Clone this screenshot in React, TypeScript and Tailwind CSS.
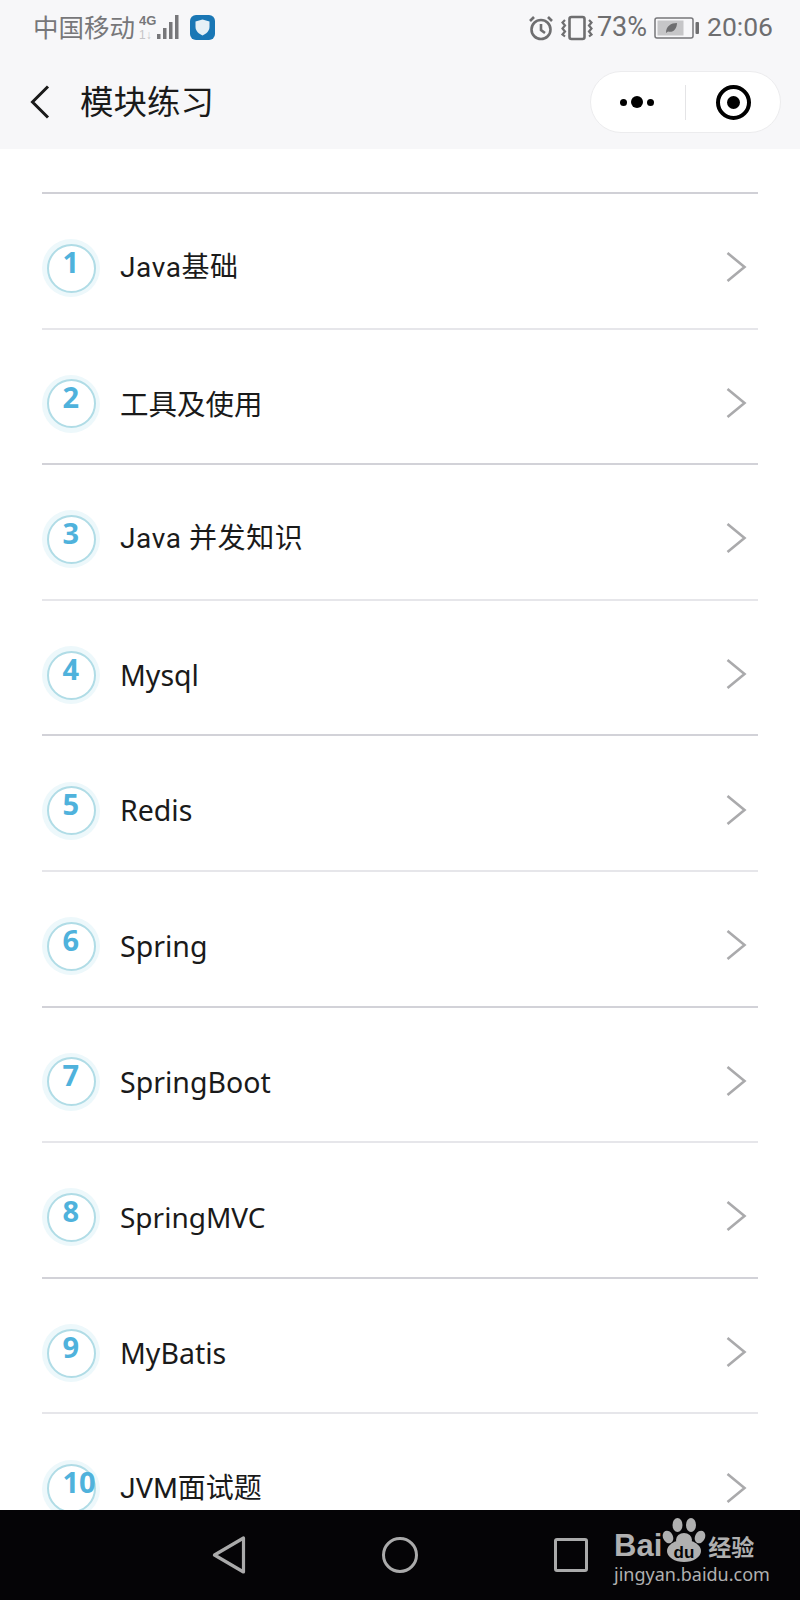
import React from "react";

// the Java and JVM rows have a wider J in the picture, Roboto fits those better
const modules = [
  { name: "Java基础", font: "font-['Roboto','Noto_Sans_CJK_SC',sans-serif] text-[28px] tracking-[0.6px]" },
  { name: "工具及使用", font: "text-[28.5px]" },
  { name: "Java 并发知识", font: "font-['Roboto','Noto_Sans_CJK_SC',sans-serif] text-[28px] tracking-[0.6px]" },
  { name: "Mysql", font: "text-[28.5px]" },
  { name: "Redis", font: "text-[28.5px]" },
  { name: "Spring", font: "text-[28.5px]" },
  { name: "SpringBoot", font: "text-[28.5px]" },
  { name: "SpringMVC", font: "text-[28px]" },
  { name: "MyBatis", font: "text-[28.5px]" },
  { name: "JVM面试题", font: "font-['Roboto','Noto_Sans_CJK_SC',sans-serif] text-[28px]" },
];

const StatusLeft = () => (
  <div className="flex items-center">
    <span className="text-[25.5px] leading-none text-[#77777a]">中国移动</span>
    <svg width="42" height="28" viewBox="0 0 42 28" className="ml-[4px]">
      <text x="0" y="11" fontSize="13" fontWeight="700" fill="#77777a" fontFamily="Liberation Sans, sans-serif">
        4G
      </text>
      <text x="0" y="25" fontSize="12" fill="#c4c4c6" fontFamily="Liberation Sans, sans-serif">
        1↓
      </text>
      <rect x="18" y="20" width="3.500" height="5" fill="#77777a" />
      <rect x="24" y="14" width="3.500" height="11" fill="#77777a" />
      <rect x="30" y="8" width="3.500" height="17" fill="#77777a" />
      <rect x="36" y="1" width="3.500" height="24" fill="#77777a" />
    </svg>
    <div className="ml-[9px] flex h-[25px] w-[25px] items-center justify-center rounded-[6px] bg-[#1a77b5]">
      <svg width="15" height="17" viewBox="0 0 15 17">
        <path d="M7.500 0.500 L14.500 2.500 V8 C14.500 12 11 15 7.500 16.500 C4 15 0.500 12 0.500 8 V2.500 Z" fill="#e6f0f6" />
      </svg>
    </div>
  </div>
);

const StatusRight = () => (
  <div className="flex items-center font-['Roboto','Noto_Sans',sans-serif]">
    <svg width="26" height="26" viewBox="0 0 26 26" fill="none" stroke="#6e6e70" strokeWidth="2.600">
      <circle cx="13" cy="14.500" r="9.500" />
      <path d="M13 9v6l4 3" />
      <path d="M2 6l4-4M24 6l-4-4" />
    </svg>
    <svg width="34" height="26" viewBox="0 0 34 26" fill="none" stroke="#6e6e70" strokeWidth="2.200" className="ml-[7px]">
      <rect x="8.500" y="2" width="15" height="22" rx="2" strokeWidth="2.600" />
      <path d="M4 5l-2.500 2.500 2.500 3-2.500 3 2.500 3-2.500 3 2.500 2" />
      <path d="M28 5l2.500 2.500-2.500 3 2.500 3-2.500 3 2.500 3-2.500 2" />
    </svg>
    <span className="ml-[2px] text-[27px] leading-none text-[#6e6e70]">73%</span>
    <svg width="46" height="24" viewBox="0 0 46 24" className="ml-[7px]">
      <rect x="1" y="2" width="38" height="20" rx="2" fill="none" stroke="#77777a" strokeWidth="1.500" />
      <rect x="3.500" y="4.500" width="26" height="15" fill="#c6c6c8" />
      <rect x="41.500" y="6" width="3.500" height="12" rx="1" fill="#6e6e70" />
      <path d="M12 17 C12 10 17 7 23 7 C23 13 19 17 14 15.500 Z" fill="#6e6e70" />
    </svg>
    <span className="ml-[7px] text-[26.500px] leading-none text-[#6e6e70]">20:06</span>
  </div>
);

const Capsule = () => (
  <div className="flex h-[62px] w-[191px] items-center rounded-full border border-[#ececee] bg-white">
    <div className="flex w-[94px] items-center justify-center gap-[4px] pr-[2px]">
      <span className="h-[7px] w-[7px] rounded-full bg-black" />
      <span className="h-[12px] w-[12px] rounded-full bg-black" />
      <span className="h-[7px] w-[7px] rounded-full bg-black" />
    </div>
    <div className="h-[35px] w-px bg-[#e4e4e6]" />
    <div className="flex flex-1 items-center justify-center">
      <div className="flex h-[35px] w-[35px] items-center justify-center rounded-full border-[4.5px] border-black">
        <span className="h-[13px] w-[13px] rounded-full bg-black" />
      </div>
    </div>
  </div>
);

const Badge = ({ n }: { n: number }) => (
  <div className="flex h-[58px] w-[58px] shrink-0 items-center justify-center rounded-full bg-[#edf8fb]">
    <div className="h-[49px] w-[49px] rounded-full border-2 border-[#b0dce6] bg-white pl-[14px]">
      <span className="block h-[34px] text-[29px] leading-[32px] font-bold whitespace-nowrap text-[#4fb2dc]">{n}</span>
    </div>
  </div>
);

const Chevron = () => (
  <svg width="22" height="32" viewBox="0 0 22 32" fill="none" stroke="#aaaaac" strokeWidth="2.600" className="mb-[2px] shrink-0">
    <path d="M2.500 2 L19.500 16 L2.500 30" />
  </svg>
);

const BaiduMark = () => (
  <div className="absolute top-[1514px] left-[614px] text-[#b0b0b0]">
    <div className="flex h-[48px] items-end">
      <span className="font-['Liberation_Sans',sans-serif] text-[31px] leading-[32px] font-bold">Bai</span>
      <svg width="44" height="46" viewBox="0 0 44 46" className="mb-[-1px]" fill="#b0b0b0">
        <ellipse cx="15.500" cy="8" rx="5" ry="7" />
        <ellipse cx="29" cy="8" rx="5" ry="7" />
        <ellipse cx="6" cy="20" rx="5" ry="6.500" transform="rotate(-25 6 20)" />
        <ellipse cx="38" cy="20" rx="5" ry="6.500" transform="rotate(25 38 20)" />
        <ellipse cx="22" cy="34" rx="17" ry="11" />
        <ellipse cx="22" cy="23" rx="8" ry="7" />
        <text x="22" y="41" textAnchor="middle" fontSize="17" fontWeight="700" fill="#050505" fontFamily="Liberation Sans, sans-serif">
          du
        </text>
      </svg>
      <span className="ml-[2px] text-[23px] leading-[30px] font-bold">经验</span>
    </div>
    <div className="text-[18px] leading-[24px] whitespace-nowrap">jingyan.baidu.com</div>
  </div>
);

export default function App() {
  return (
    <div className="relative flex h-[1600px] w-[800px] flex-col overflow-hidden bg-white font-['Noto_Sans','Noto_Sans_CJK_SC',sans-serif] text-[#1a1a1a]">
      <header className="h-[149px] shrink-0 bg-[#f7f7f9]">
        <div className="flex h-[55px] items-center justify-between pr-[27px] pl-[33px]">
          <StatusLeft />
          <StatusRight />
        </div>
        <div className="flex h-[94px] items-center pr-[19px] pl-[30px]">
          <svg width="20" height="34" viewBox="0 0 20 34" fill="none" stroke="#1a1a1a" strokeWidth="3">
            <path d="M18 1.500 L2.500 17 L18 32.500" />
          </svg>
          <h1 className="ml-[30px] flex-1 text-[33.500px] leading-none font-normal">模块练习</h1>
          <Capsule />
        </div>
      </header>

      <main className="flex-1 overflow-hidden px-[42px] pt-[43px]">
        <div className="border-b-2 border-[#d0d0d6]" />
        {modules.map((item, i) => (
          <div
            key={item.name}
            className={`flex h-[135.6px] items-center border-b-2 pt-[15px] pr-[11px] ${
              i % 2 ? "border-[#d2d2d8]" : "border-[#e6e6ea]"
            }`}
          >
            <Badge n={i + 1} />
            <span className={`ml-[20px] flex-1 leading-none ${item.font}`}>{item.name}</span>
            <Chevron />
          </div>
        ))}
      </main>

      <footer className="flex h-[90px] shrink-0 items-center justify-center bg-[#050406] pb-[1px]">
        <div className="flex w-[171px] justify-center">
          <svg width="34" height="38" viewBox="0 0 34 38" fill="none" stroke="#aaaaaa" strokeWidth="3.200" strokeLinejoin="round">
            <path d="M31.500 2 V36 L2.500 19 Z" />
          </svg>
        </div>
        <div className="flex w-[171px] justify-center">
          <div className="h-[36px] w-[36px] rounded-full border-[3px] border-[#aaaaaa]" />
        </div>
        <div className="flex w-[171px] justify-center">
          <div className="h-[34px] w-[34px] rounded-[3px] border-[3px] border-[#aaaaaa]" />
        </div>
      </footer>

      <BaiduMark />
    </div>
  );
}
